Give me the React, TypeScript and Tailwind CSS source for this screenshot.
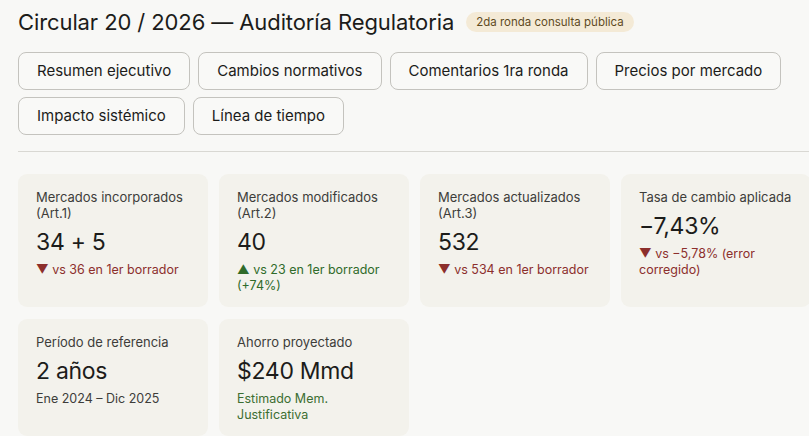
import React from "react";

type Stat = {
  label: string;
  value: string;
  note: string;
  tone: "down" | "up" | "muted" | "green";
};

const tabs = [
  "Resumen ejecutivo",
  "Cambios normativos",
  "Comentarios 1ra ronda",
  "Precios por mercado",
  "Impacto sistémico",
  "Línea de tiempo",
];

const stats: Stat[] = [
  { label: "Mercados incorporados (Art.1)", value: "34 + 5", note: "▼ vs 36 en 1er borrador", tone: "down" },
  { label: "Mercados modificados (Art.2)", value: "40", note: "▲ vs 23 en 1er borrador (+74%)", tone: "up" },
  { label: "Mercados actualizados (Art.3)", value: "532", note: "▼ vs 534 en 1er borrador", tone: "down" },
  { label: "Tasa de cambio aplicada", value: "−7,43%", note: "▼ vs −5,78% (error corregido)", tone: "down" },
  { label: "Período de referencia", value: "2 años", note: "Ene 2024 – Dic 2025", tone: "muted" },
  { label: "Ahorro proyectado", value: "$240 Mmd", note: "Estimado Mem. Justificativa", tone: "green" },
];

const toneClass = {
  down: "text-[#8c2f2c]",
  up: "text-[#2f6b2a]",
  green: "text-[#3c6e32]",
  muted: "text-[#3d3d3a]",
};

function StatCard({ s }: { s: Stat }) {
  return (
    <div className="rounded-[9px] bg-[#f3f2ec] px-[18px] pt-[15px] pb-[13px]">
      <div className="text-[13px] leading-[16px] text-[#3d3d3a]">{s.label}</div>
      <div className="mt-[6px] text-[23px] leading-[30px] tracking-[-0.3px] text-[#1c1c1a]">{s.value}</div>
      <div className={`mt-[5px] text-[12.5px] leading-[16px] ${toneClass[s.tone]}`}>{s.note}</div>
    </div>
  );
}

export default function App() {
  return (
    <div
      className="min-h-screen w-full overflow-hidden bg-[#f8f8f6] text-[#1c1c1a]"
      style={{ fontFamily: "Inter, 'Noto Sans', sans-serif" }}
    >
      <div className="w-[811px] pl-[18px] pt-[8px]">
        {/* Title */}
        <div className="flex items-center gap-[12px]">
          <h1 className="text-[22px] leading-[28px] font-normal tracking-[-0.1px] text-[#1c1c1a]">
            Circular 20 / 2026 — Auditoría Regulatoria
          </h1>
          <span className="rounded-full bg-[#f4ead6] px-[10px] py-[2px] text-[11.5px] leading-[16px] text-[#5f4a1f]">
            2da ronda consulta pública
          </span>
        </div>

        {/* Tabs */}
        <div className="mt-[16px] flex w-[790px] flex-wrap gap-x-[8px] gap-y-[7px]">
          {tabs.map((t) => (
            <button
              key={t}
              className="h-[38px] rounded-[8px] border border-[#c4c3be] bg-[#f9f9f7] px-[18px] text-[15px] text-[#1c1c1a]"
            >
              {t}
            </button>
          ))}
        </div>

        <div className="mt-[16px] border-t border-[#d9d8d3]" />

        {/* Stats */}
        <div className="mt-[22px] grid grid-cols-[repeat(4,190px)] gap-x-[11px] gap-y-[12px]">
          {stats.map((s) => (
            <StatCard key={s.label} s={s} />
          ))}
        </div>
      </div>
    </div>
  );
}
